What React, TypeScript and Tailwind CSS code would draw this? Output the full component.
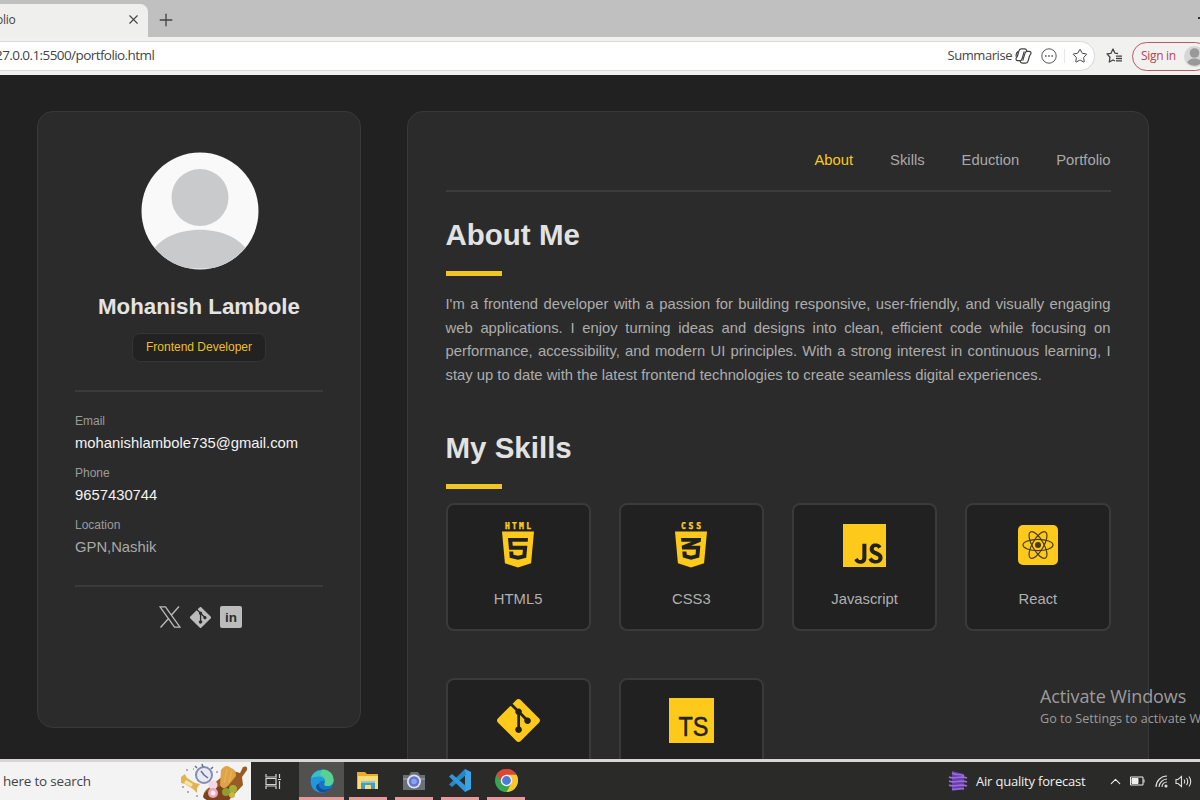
import React from 'react';
import { BsGit } from 'react-icons/bs';
import { FaHtml5, FaCss3Alt } from 'react-icons/fa';
import { SiJavascript, SiGit } from 'react-icons/si';
import { ChevronUp, Plus, Star, X } from 'lucide-react';

const navItems = ['About', 'Skills', 'Eduction', 'Portfolio'];

const contacts = [
  { label: 'Email', value: 'mohanishlambole735@gmail.com', link: true },
  { label: 'Phone', value: '9657430744', link: true },
  { label: 'Location', value: 'GPN,Nashik', link: false },
];

const ShieldIcon = ({ word, children }: { word: string; children: React.ReactNode }) => (
  <div className="flex w-11 flex-col items-center pt-0.5">
    <svg width="30" height="8" viewBox="0 0 30 8" fill="#fdc91b" stroke="#fdc91b" strokeWidth="0.4">
      <text
        x={word === 'HTML' ? 2 : 5}
        y="6.500"
        textLength={word === 'HTML' ? 26 : 20}
        fontFamily="DejaVu Sans Mono, monospace"
        fontWeight="700"
        fontSize="8"
      >
        {word}
      </text>
    </svg>
    <div className="-mt-px">{children}</div>
  </div>
);

const ReactIcon = () => (
  <svg width="40" height="40" viewBox="0 0 40 40" fill="none" stroke="#4a3b10" strokeWidth="1.200">
    <rect width="40" height="40" rx="5" fill="#fdc91b" stroke="none" />
    <ellipse cx="20" cy="20" rx="15" ry="5.600" />
    <ellipse cx="20" cy="20" rx="15" ry="5.600" transform="rotate(60 20 20)" />
    <ellipse cx="20" cy="20" rx="15" ry="5.600" transform="rotate(120 20 20)" />
    <circle cx="20" cy="20" r="3" fill="#4a3b10" stroke="none" />
  </svg>
);

const TsIcon = () => (
  <svg width="45" height="45" viewBox="0 0 45 45">
    <rect width="45" height="45" fill="#fdc91b" />
    <text
      x="9.500"
      y="38"
      textLength="30"
      lengthAdjust="spacingAndGlyphs"
      fontFamily="Liberation Sans, sans-serif"
      fontSize="27"
      fill="#222"
      stroke="#222"
      strokeWidth="0.500"
    >
      TS
    </text>
  </svg>
);

const skills = [
  { name: 'HTML5', icon: <ShieldIcon word="HTML"><FaHtml5 className="h-[41px] w-8" preserveAspectRatio="none" /></ShieldIcon> },
  { name: 'CSS3', icon: <ShieldIcon word="CSS"><FaCss3Alt className="h-[41px] w-8" preserveAspectRatio="none" /></ShieldIcon> },
  { name: 'Javascript', icon: <SiJavascript size={43} /> },
  { name: 'React', icon: <ReactIcon /> },
  { name: 'Git', icon: <SiGit size={43} /> },
  { name: 'Typescript', icon: <TsIcon /> },
];

const BrowserBar = () => (
  <header className="shrink-0 font-['Open_Sans',sans-serif] text-[#444]">
    <div className="flex h-[37px] items-end bg-[#c0c0c0]">
      <div className="flex h-[33px] w-[148px] items-center justify-between rounded-tr-lg bg-[#efefed] pr-[7px] pb-0.5">
        <span className="-ml-1 text-xs tracking-[-0.3px]">olio</span>
        <X size={15} strokeWidth={1.8} />
      </div>
      <div className="flex h-[33px] items-center pb-0.5 pl-2">
        <Plus size={20} strokeWidth={1.6} />
      </div>
      <span className="mb-[18px] ml-auto h-0.5 w-0.5 bg-[#333]" />
    </div>
    <div className="flex h-[38px] items-center bg-[#f1f1ef]">
      <div className="flex h-[30px] w-[1095px] shrink-0 items-center rounded-r-full border border-l-0 border-[#d9d9d9] bg-white">
        <span className="-ml-[5px] pb-px text-[13.500px] tracking-[-0.580px]">27.0.0.1:5500/portfolio.html</span>
        <span className="mr-[3px] ml-auto text-[13px] tracking-[-0.450px]">Summarise</span>
        <svg width="17" height="16" viewBox="0 0 18 17" fill="none" stroke="#444" strokeWidth="1.300" strokeLinejoin="round">
          <path d="M6.500 1h4c1.500 0 1.800 1 2.200 2.400M6.500 1C5 1 4.400 2 4 3.500L2.700 8.200C2.200 10.200 1 10 1 11.700 1 13 2 13.500 3 13.500h2.300c1.500 0 1.900-1 2.300-2.500L9.800 3.600" />
          <path d="M11.500 16h-4c-1.500 0-1.800-1-2.200-2.400M11.500 16c1.500 0 2.100-1 2.500-2.500l1.300-4.700C15.800 6.800 17 7 17 5.300 17 4 16 3.500 15 3.500h-2.300c-1.500 0-1.900 1-2.300 2.500L8.200 13.400" />
          <path d="M1.300 9.500C.8 6 2 4 4 3.500" />
        </svg>
        <svg className="ml-[9px]" width="16" height="16" viewBox="0 0 16 16" fill="none" stroke="#555">
          <circle cx="8" cy="8" r="7.200" />
          <path d="M4 8h1.600M7.200 8h1.600M10.400 8H12" strokeWidth="1.500" />
        </svg>
        <span className="ml-[7px] h-3.5 w-px bg-[#e8e8e8]" />
        <Star className="mr-1.5 ml-[7px]" size={16} strokeWidth={1.5} />
      </div>
      <svg className="ml-[11px] shrink-0" width="17" height="16" viewBox="0 0 17 16" fill="none" stroke="#444" strokeWidth="1.300" strokeLinejoin="round">
        <path d="M12 5.500 9 5.200 7 1 5 5.300 1 5.900l3 3.300L3.300 14 7 12l2 1M10 8.200h6M10 10.500h6M10 12.800h6" />
      </svg>
      <div className="ml-[9px] flex h-[29px] w-[78px] shrink-0 items-center rounded-full border-[1.5px] border-[#bd5965] pl-2">
        <span className="text-xs tracking-[-0.3px] whitespace-nowrap text-[#b64651]">Sign in</span>
        <svg className="ml-2 shrink-0" width="21" height="21" viewBox="0 0 21 21">
          <circle cx="10.500" cy="10.500" r="10.500" fill="#d6d6d6" />
          <circle cx="10.500" cy="7" r="4.800" fill="#999" />
          <path d="M3.500 17c0-6 14-6 14 0q-7 5.500-14 0" fill="#999" />
        </svg>
      </div>
    </div>
  </header>
);

const Sidebar = () => (
  <aside className="flex h-[617px] w-[324px] shrink-0 flex-col items-center rounded-2xl border border-[#393939] bg-[#2b2b2b] px-9 pt-10">
    <svg className="ml-px" width="118" height="118" viewBox="0 0 118 118">
      <clipPath id="avatar">
        <circle cx="59" cy="59" r="58.500" />
      </clipPath>
      <g clipPath="url(#avatar)">
        <rect width="118" height="118" fill="#f9f9f9" />
        <circle cx="59" cy="45.500" r="28.500" fill="#c9cacc" />
        <path d="M8 107C19 68 99 68 110 107V116.500H8z" fill="#c9cacc" />
      </g>
    </svg>
    <h1 className="mt-[23px] text-[22.300px] leading-[28px] font-bold text-[#e4e4e4]">Mohanish Lambole</h1>
    <p className="mt-3 flex h-[29px] w-[134px] items-center justify-center rounded-lg border border-[#353535] bg-[#222] pb-0.5 text-xs text-[#eebf25]">
      Frontend Developer
    </p>
    <div className="mt-7 w-[248px] border-t-2 border-[#3b3b3b] pt-5">
      {contacts.map((c) => (
        <div key={c.label} className="mb-2 h-11">
          <p className="text-xs leading-[18px] text-[#9b9b9b]">{c.label}</p>
          <p className={`text-[14.8px] leading-[26px] ${c.link ? 'text-[#f3f3f3]' : 'text-[#a9a9a9]'}`}>{c.value}</p>
        </div>
      ))}
    </div>
    <div className="mt-[17px] flex w-[248px] items-center justify-center border-t-2 border-[#3b3b3b] pt-[19px] pl-[3px] text-[#bcbcbc]">
      <svg width="22" height="22" viewBox="0 0 22 22" fill="none" stroke="currentColor" strokeWidth="1.300">
        <path d="M1 .8h5.500L21 21.200h-5.500zM20 .5l-8 9M9.800 12.200 1.500 21.500" />
      </svg>
      <BsGit size={21} className="ml-[9px]" />
      <svg className="ml-[9px]" width="22" height="22" viewBox="0 0 22 22">
        <rect width="22" height="22" rx="2" fill="#bcbcbc" />
        <text x="5" y="15.500" textLength="12" fontFamily="Liberation Sans, sans-serif" fontWeight="700" fontSize="13.500" fill="#2b2b2b">in</text>
      </svg>
    </div>
  </aside>
);

const SectionTitle = ({ children }: { children: React.ReactNode }) => (
  <div>
    <h2 className="text-[29.500px] leading-9 font-bold text-[#e2e2e2]">{children}</h2>
    <div className="mt-[18px] h-[5px] w-14 bg-[#f1c522]" />
  </div>
);

const MainPanel = () => (
  <main className="h-[760px] w-[742px] shrink-0 rounded-2xl border border-[#393939] bg-[#2b2b2b] px-[37.5px]">
    <nav className="flex h-20 items-center justify-end gap-[37px] border-b-2 border-[#3c3c3c] pt-[18px] text-[14.800px] text-[#a9a9a9]">
      {navItems.map((item, i) => (
        <a key={item} className={i === 0 ? 'text-[#f8ca1c]' : ''}>{item}</a>
      ))}
    </nav>
    <section className="pt-[25px]">
      <SectionTitle>About Me</SectionTitle>
      <p className="mt-[17px] text-justify text-[14.800px] leading-[23.700px] text-[#adadad]">
        I'm a frontend developer with a passion for building responsive, user-friendly, and visually engaging web
        applications. I enjoy turning ideas and designs into clean, efficient code while focusing on performance,
        accessibility, and modern UI principles. With a strong interest in continuous learning, I stay up to date with
        the latest frontend technologies to create seamless digital experiences.
      </p>
    </section>
    <section className="pt-[42.500px]">
      <SectionTitle>My Skills</SectionTitle>
      <div className="mt-[14px] grid grid-cols-4 gap-x-7 gap-y-[47px]">
        {skills.map((skill) => (
          <div key={skill.name} className="flex h-32 flex-col items-center rounded-lg border-2 border-[#3a3a3a] bg-[#212121]">
            <div className="mt-4 flex h-12 items-center text-[#fdc91b]">{skill.icon}</div>
            <p className="mt-[18px] text-[14.800px] leading-6 text-[#b0b0b0]">{skill.name}</p>
          </div>
        ))}
      </div>
    </section>
  </main>
);

const SearchArt = () => (
  <svg width="70" height="37" viewBox="0 0 70 37">
    <path d="m27 27 24-20 10 3 3-6q5-2 4 3l-5 7 1 8-14 15H28q-7-3-1-10" fill="#9a5c27" />
    <path d="m27 29 17-7 14 3-8 12H28q-7-3-1-8" fill="#7d421c" />
    <path d="m41 22 1-15q5-7 10-2 5 1 5 8l-9 11q-5 3-7-2" fill="#e0a345" />
    <path d="m45 20 3-14M50 19l3-11" stroke="#e9b359" strokeWidth="1.200" />
    <circle cx="34" cy="22" r="4.500" fill="#f3d7e2" />
    <circle cx="34" cy="30" r="5" fill="#e9a8bd" />
    <circle cx="34" cy="30" r="2.500" fill="#fbe9ef" />
    <circle cx="47" cy="29" r="4" fill="#8f9c2f" />
    <circle cx="54" cy="26" r="4" fill="#a7ae37" />
    <circle cx="53" cy="32" r="3" fill="#cbb644" />
    <circle cx="25" cy="12" r="8" fill="#e7e9f4" stroke="#858dad" strokeWidth="2" />
    <path d="m22 8 3 4 4 3M24 4l-1-3M18 5l-2-2M32 6l2-2" fill="none" stroke="#666e91" strokeWidth="1.500" />
    <path d="m2 14 4-3 2 4 8 5 5 1-3 4 0 5-4-4-8-5-4-1z" fill="#e3b34f" />
    <path d="m7 17 7 4-2 3-7-4z" fill="#f5e3ad" />
    <path d="M7 7h2M14 6h1M3 24h2M8 29h2M17 33h2M37 9h2" stroke="#b5a9c9" strokeWidth="2" />
  </svg>
);

const EdgeIcon = () => (
  <svg width="24" height="24" viewBox="0 0 24 24">
    <circle cx="12" cy="12" r="11.500" fill="#1475c9" />
    <path d="M1 10C3-2 22-2 23.500 11c.4 4-3 6-6 6-4 0-3-2-2.600-3.500C16 9 8 5 1 10" fill="#36bfc4" />
    <path d="M12 .5C20 0 24 6 23.500 12c-.5 3-3 5-6 5-4 0-3-2-2.600-3.500C16 10 14 7 10 6z" fill="#58d291" />
    <path d="M1 10c7-5 14-1 14 3.500-1-2-5-3-6 1-1 5 5 8 11 5C13 27-1 24 1 10" fill="#2196db" />
    <path d="M9 14.500c-1 5 5 8 12 4.500-3 4-8 5-11 4-5-3-5-7-1-8.500" fill="#174c93" />
  </svg>
);

const ExplorerIcon = () => (
  <svg width="22" height="19" viewBox="0 0 22 19">
    <path d="M0 1h8l2 2h11v15H0z" fill="#e8ac28" />
    <path d="M1 5h20v13H1z" fill="#fbdc74" />
    <path d="M4 18v-8h14v8h-4v-4H8v4z" fill="#489bc0" />
    <path d="M4 10h14v2H4z" fill="#8ac6d9" />
  </svg>
);

const CameraIcon = () => (
  <svg width="24" height="20" viewBox="0 0 24 20">
    <path d="M1 4h6l2-3h7l2 3h5v15H1z" fill="#6b7077" />
    <path d="M1 7h22v2H1z" fill="#8a8e94" />
    <circle cx="12" cy="10.500" r="7" fill="#e2e0eb" />
    <circle cx="12" cy="10.500" r="5.200" fill="#6573d1" />
    <circle cx="12" cy="10.500" r="2.800" fill="#8aa5ee" />
  </svg>
);

const CodeIcon = () => (
  <svg width="24" height="23" viewBox="0 0 24 23">
    <path d="m17 0 6 3v17l-6 3z" fill="#3da4e3" />
    <path d="m17 0 1 6L4 18l-3-2.500z" fill="#2588cb" />
    <path d="m17 23 1-6L4 5 1 7.500z" fill="#2f98da" />
  </svg>
);

const ChromeIcon = () => (
  <svg width="23" height="23" viewBox="0 0 24 24">
    <circle cx="12" cy="12" r="12" fill="#35a552" />
    <path d="M1.600 6A12 12 0 0 1 22.400 6L12 7 7 14z" fill="#df4536" />
    <path d="M22.400 6A12 12 0 0 1 12 24l5-9-5-9z" fill="#f8c72c" />
    <circle cx="12" cy="12" r="6" fill="#f6f3f1" />
    <circle cx="12" cy="12" r="4.600" fill="#477dd9" />
  </svg>
);

const pinnedApps = [ExplorerIcon, CameraIcon, CodeIcon, ChromeIcon];

const Taskbar = () => (
  <footer className="flex h-[41px] shrink-0 border-t-[3px] border-[#d9d5d4] bg-[#2a2a28] font-['Open_Sans',sans-serif]">
    <div className="flex w-[251px] items-center justify-between bg-[#f3f3f3] pr-0.5 pl-[3px]">
      <span className="text-[13.500px] tracking-[-0.2px] text-[#444]">here to search</span>
      <SearchArt />
    </div>
    <div className="flex w-12 items-center justify-center pr-[3px]">
      <svg width="17" height="15" viewBox="0 0 17 15" fill="none" stroke="#d5d5d5" strokeWidth="1.200">
        <path d="M1 0v3h10V0M1 15v-3h10v3M1 4.500h10v6H1zM14.500 0v4M14.500 7v8M13 5.500h3" />
      </svg>
    </div>
    <div className="flex w-[45px] flex-col items-center bg-[#51524f]">
      <div className="flex flex-1 items-center pt-0.5"><EdgeIcon /></div>
      <div className="h-[3px] w-full bg-[#e79a9c]" />
    </div>
    <div className="ml-[5px] flex gap-2">
      {pinnedApps.map((Icon, i) => (
        <div key={i} className="flex w-[38px] flex-col items-center">
          <div className="flex flex-1 items-center pt-0.5"><Icon /></div>
          <div className="h-[3px] w-full bg-[#e79a9c]" />
        </div>
      ))}
    </div>
    <div className="ml-auto flex items-center pr-2 text-[#f0f0f0]">
      <svg width="20" height="22" viewBox="0 0 20 22">
        <path d="m4 1 12 3v15L4 21z" fill="#6440a8" />
        <path d="M1 7c5 3 11-2 18 1M1 11c5 3 11-2 18 1M1 15c5 3 11-2 18 1M4 3c4 3 8 0 12 3M4 19c4 1 8-1 12 0" fill="none" stroke="#9d6be0" strokeWidth="1.600" />
      </svg>
      <span className="ml-2 w-[111px] pt-0.5 text-[13px] tracking-[-0.2px] whitespace-nowrap">Air quality forecast</span>
      <ChevronUp className="ml-5" size={17} strokeWidth={1.500} />
      <svg className="ml-1.5" width="15" height="10" viewBox="0 0 15 10" fill="none" stroke="#eee">
        <path d="M.5 1h12.500v8H.5zM14 3.500v3" />
        <path d="M2 2.500h6v5H2z" fill="#eee" />
      </svg>
      <svg className="ml-2.5" width="13" height="13" viewBox="0 0 13 13" fill="none" stroke="#ddd" strokeWidth="1.100">
        <path d="M1 12C1 6 6 1 12 1M4 12c0-4 4-8 8-8M7 12c0-3 2-5 5-5" />
        <circle cx="11" cy="11" r="1" fill="#ddd" />
      </svg>
      <svg className="ml-[7px]" width="17" height="13" viewBox="0 0 17 13" fill="none" stroke="#ddd" strokeWidth="1.100">
        <path d="M1 4.500h2L6.500 1.500v10L3 8.500H1zM9 4.500q1.500 2 0 4M11.500 3q2.500 3.500 0 7M14 1.500q3.500 5 0 10" />
      </svg>
    </div>
  </footer>
);

const App = () => {
  return (
    <div className="relative flex h-[800px] w-[1200px] flex-col overflow-hidden bg-[#212121] font-['Liberation_Sans',Arial,sans-serif]">
      <BrowserBar />
      <div className="flex h-[684px] shrink-0 items-start gap-[46px] overflow-hidden pt-9 pl-[37px]">
        <Sidebar />
        <MainPanel />
      </div>
      <Taskbar />
      {/* Activation watermark sits over the page */}
      <div className="absolute top-[684px] left-[1040px] font-['Open_Sans',sans-serif] whitespace-nowrap text-[#9c9c9c]">
        <p className="text-[18px] leading-[25px] tracking-[-0.1px]">Activate Windows</p>
        <p className="text-[12.600px] leading-5">Go to Settings to activate Windows.</p>
      </div>
    </div>
  );
};

export default App;
